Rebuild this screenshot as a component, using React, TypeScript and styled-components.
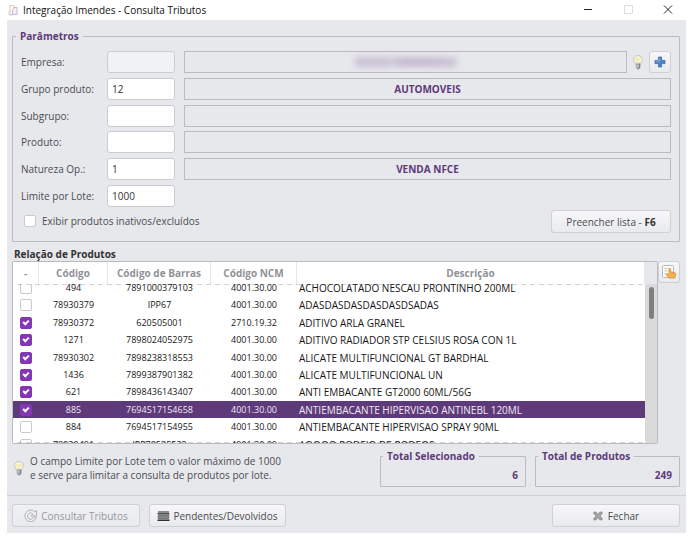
import React, { useLayoutEffect, useRef, useState } from "react";
import styled, { createGlobalStyle } from "styled-components";

const purple = "#5e3a7b";
const accent = "#8437b4";
const panel = "#e7e8ec";
const line = "#b9bbbf";

const GlobalStyle = createGlobalStyle`
  *, *::before, *::after { box-sizing: border-box; }
  body {
    margin: 0;
    background: #fff;
    color: #4a4c50;
    font: 10px/14px "Open Sans", "Noto Sans", sans-serif;
  }
  button, input { font: inherit; color: inherit; }
`;

const TitleBar = styled.header`
  display: flex;
  align-items: center;
  height: 20px;
  padding-left: 8px;
  background: #fff;
`;

const Title = styled.h1`
  flex: 1;
  margin: 0 0 0 4px;
  font-size: 10px;
  font-weight: 400;
  line-height: 18px;
  color: #111;
`;

const WindowButton = styled.button`
  display: flex;
  align-items: center;
  justify-content: center;
  width: 40px;
  height: 18px;
  padding: 0;
  border: 0;
  background: none;
`;

const Client = styled.main`
  margin: 0 2px 5px 7px;
  padding: 9px 6px 6px 5px;
  background: ${panel};
`;

const Group = styled.fieldset`
  min-width: 0;
  margin: 0;
  padding: 8px;
  border: 1px solid ${line};
  border-radius: 1px;
`;

const Legend = styled.legend`
  padding: 0 4px;
  margin-left: -5px;
  font-weight: 700;
  line-height: 14px;
  color: ${purple};
`;

const Fields = styled.div`
  display: grid;
  align-content: space-between;
  min-height: 156px;
`;

const FieldRow = styled.div`
  display: grid;
  grid-template-columns: 77px 68px 1fr auto;
  column-gap: 9px;
  align-items: center;
`;

const FieldLabel = styled.label`
  white-space: nowrap;
`;

const TextBox = styled.input`
  width: 100%;
  height: 22px;
  padding: 0 4px;
  border: 1px solid #cbccd1;
  border-radius: 3px;
  background: #fff;
  color: #333;
  &:disabled { background: #f1f2f4; }
`;

const Display = styled.output<{ $wide?: boolean }>`
  display: flex;
  align-items: center;
  justify-content: center;
  height: 22px;
  grid-column: ${(p) => (p.$wide ? "span 2" : "auto")};
  border: 1px solid ${line};
  font-weight: 700;
  color: ${purple};
`;

const Redacted = styled.span`
  width: 102px;
  height: 10px;
  background: linear-gradient(90deg, #cac1d4 0 30%, #d2cbdb 36%, #c5bad0 45% 75%, #cdc5d7);
  filter: blur(3px);
`;

const Tools = styled.div`
  display: flex;
  align-items: center;
  gap: 6px;
  margin-left: -3px;
`;

const Button = styled.button<{ $width?: number }>`
  display: inline-flex;
  align-items: center;
  justify-content: center;
  gap: 3px;
  height: 23px;
  min-width: ${(p) => p.$width ?? 22}px;
  padding: 0;
  border: 1px solid #cfd0d5;
  border-radius: 3px;
  background: linear-gradient(#f7f7f9, #e9eaec);
  color: #4a4c50;
  white-space: nowrap;
  b { color: #333; }
  &:disabled { color: #96989c; background: linear-gradient(#f0f1f3, #e9eaed); }
`;

const IconButton = styled(Button)`
  height: 22px;
`;

const GroupFooter = styled.div`
  display: flex;
  justify-content: space-between;
  align-items: flex-start;
  padding-top: 3px;
`;

const CheckLabel = styled.label`
  display: flex;
  align-items: center;
  gap: 6px;
  padding: 4px 0 0 3px;
`;

const Check = styled.input`
  appearance: none;
  display: block;
  width: 12px;
  height: 12px;
  margin: 0;
  border: 1px solid #c9cacd;
  border-radius: 2px;
  background: #fff;
  &:checked {
    border-color: ${accent};
    background: ${accent};
  }
  &:checked::before {
    content: "";
    display: block;
    width: 6px;
    height: 4px;
    margin: 2px 0 0 2px;
    border: solid #fff;
    border-width: 0 0 2px 2px;
    transform: rotate(-45deg);
  }
`;

const SectionTitle = styled.h2`
  margin: 5px 0 0 2px;
  font-size: 10px;
  line-height: 14px;
  color: #333;
`;

const ListArea = styled.div`
  display: grid;
  grid-template-columns: 1fr 22px;
  align-items: start;
`;

const ListFrame = styled.div`
  position: relative;
  display: grid;
  grid-template-columns: 1fr 12px;
  height: 183px;
  border: 1px solid ${line};
  border-radius: 2px;
  background: #fff;
`;

const Scroller = styled.div`
  min-width: 0;
  overflow: hidden;
`;

const Table = styled.table`
  width: 100%;
  table-layout: fixed;
  border-collapse: separate;
  border-spacing: 0;
  color: #161616;
  font-size: 9px;
`;

const Th = styled.th<{ $w?: number }>`
  position: sticky;
  top: 0;
  width: ${(p) => (p.$w ? p.$w + "px" : "auto")};
  height: 22px;
  padding: 0;
  border-right: 1px solid #e6e6e8;
  background: #fff;
  color: #909296;
  font-size: 10px;
`;

const Tr = styled.tr<{ $active: boolean }>`
  height: 17px;
  background: ${(p) => (p.$active ? purple : "#fff")};
  color: ${(p) => (p.$active ? "#eee8f3" : "inherit")};
  &:nth-child(5n + 2), &:nth-child(5n + 4) { height: 18px; }
`;

const Td = styled.td<{ $left?: boolean }>`
  padding: 0 0 0 ${(p) => (p.$left ? 2 : 0)}px;
  text-align: ${(p) => (p.$left ? "left" : "center")};
  font-size: ${(p) => (p.$left ? 10 : 9)}px;
  line-height: 12px;
  white-space: nowrap;
  ${Check} { margin-left: 7px; }
`;

const Dashes = styled.i<{ $bottom?: boolean }>`
  position: absolute;
  left: 4px;
  right: 12px;
  ${(p) => (p.$bottom ? "bottom: 0" : "top: 22px")};
  height: 1px;
  background: repeating-linear-gradient(90deg, #d2d2d4 0 5px, transparent 5px 9px);
  mix-blend-mode: multiply;
`;

const ScrollTrack = styled.div`
  padding: 25px 3px 0 4px;
  background: linear-gradient(${panel} 22px, #dadadb 22px);
`;

const ScrollThumb = styled.div`
  height: 32px;
  border-radius: 3px;
  background: #7d7f82;
`;

const Summary = styled.div`
  display: grid;
  grid-template-columns: 1fr 146px 145px;
  column-gap: 9px;
  align-items: start;
  padding-top: 5px;
`;

const Hint = styled.p`
  display: flex;
  align-items: center;
  gap: 6px;
  margin: 5px 0 0 2px;
`;

const TotalGroup = styled(Group)`
  padding: 5px 7px 4px;
`;

const TotalValue = styled.output`
  display: block;
  text-align: right;
  font-weight: 700;
  color: ${purple};
`;

const Actions = styled.footer`
  display: flex;
  gap: 9px;
  margin: 8px -6px 0 -5px;
  padding: 8px 6px 0 5px;
  border-top: 1px solid #cfd0d4;
  & > :last-child { gap: 5px; margin-left: auto; }
`;

const Bulb = () => (
  <svg width="10" height="15" viewBox="0 0 10 15" aria-hidden="true">
    <path d="M5 .6C2.300 .6.6 2.400.6 4.600c0 2 1.500 2.800 2 4.900h4.800c.5-2.100 2-2.900 2-4.900C9.400 2.400 7.700.6 5 .6z" fill="#f7f6e4" stroke="#bdbdb4" strokeWidth=".8" />
    <path d="M1.800 3.500Q5 2 8.200 3.500L7.600 5.800H2.400z" fill="#f3edaa" />
    <path d="M4 9V6.500M6 9V6.500" stroke="#c9c7a8" strokeWidth=".7" />
    <path d="M2.800 8.500h4.400v4L6 14.200H4L2.800 12.500z" fill="#9c9d9b" />
    <path d="M3 10.200h3.500M3 12h3" stroke="#dddddb" strokeWidth=".7" />
    <path d="M6.700 8.700v4L5 14" fill="none" stroke="#707271" strokeWidth=".9" />
  </svg>
);

const AppIcon = () => (
  <svg width="11" height="12" viewBox="0 0 11 12" aria-hidden="true">
    <path d="M2 1.500h4v9H2z" fill="#fff" stroke="#efc98d" />
    <path d="M6 3.500h3v7H4.500V6z" fill="#f3effa" stroke="#c5b7df" />
    <path d="M1 6.500v4.500h4" fill="none" stroke="#dfcdec" />
  </svg>
);

const PlusIcon = () => (
  <svg width="12" height="12" viewBox="0 0 12 12" aria-hidden="true">
    <path d="M4.400 1h3.200v3.400H11v3.200H7.600V11H4.400V7.600H1V4.400h3.400z" fill="#4b84c6" stroke="#3f6fad" strokeWidth=".8" strokeLinejoin="round" />
    <path d="M5.300 2v3.200H2" fill="none" stroke="#86b2e2" strokeWidth=".9" />
  </svg>
);

const PickIcon = () => (
  <svg width="16" height="16" viewBox="0 0 16 16" aria-hidden="true">
    <rect x="1.500" y="1.500" width="11" height="12" rx="1" fill="#fafaf7" stroke="#b9bab6" />
    <path d="M3.500 4.500h4M3.500 7h3M3.500 9.500h2" stroke="#c8c9c6" />
    <path d="M8 5.200c0-1 1.600-1 1.600 0v2.600l3.900.8c1 .3 1.300 1 1.100 1.900l-.7 3.500H8L5.300 10.800c-.5-.8.500-1.500 1.200-1l1.500.8z" fill="#f2b55c" stroke="#d48d34" strokeWidth=".8" />
    <path d="M10.900 8.500v1.600M12.600 9v1.400" stroke="#d48d34" strokeWidth=".7" />
  </svg>
);

const RefreshIcon = () => (
  <svg width="14" height="14" viewBox="0 0 14 14" aria-hidden="true" fill="none" stroke="#b0b1b4" strokeLinejoin="round" strokeLinecap="round">
    <path d="M12.300 8.500A5.800 5.800 0 1 1 10.800 2.800L12.500 1.500V7H7l1.900-2.100A3.200 3.200 0 1 0 9.600 8.500z" fill="#f1f1f3" />
  </svg>
);

const StackIcon = () => (
  <svg width="13" height="12" viewBox="0 0 13 12" aria-hidden="true">
    <path d="M1 1h11v2.500H1z" fill="#8b8c8c" />
    <path d="M.5 3.300h12v1.200H.5zM.5 6.500h12v1H.5zM.5 9.500h12V11H.5z" fill="#303131" />
    <path d="M1 4.500h11v2H1zM1 7.500h11v2H1z" fill="#777979" />
  </svg>
);

const CloseIcon = () => (
  <svg width="10" height="10" viewBox="0 0 11 11" aria-hidden="true">
    <path d="M1 1.200h2.400l2.100 2.500 2.100-2.500H10v2L7.600 5.500 10 7.800v2H7.600L5.500 7.300 3.400 9.800H1v-2l2.400-2.300L1 3.200z" fill="#a4a5a4" stroke="#858785" strokeWidth=".8" strokeLinejoin="round" />
  </svg>
);

const fields = [
  { id: "grupo", label: "Grupo produto:", value: "12", text: "AUTOMOVEIS" },
  { id: "subgrupo", label: "Subgrupo:", value: "", text: "" },
  { id: "produto", label: "Produto:", value: "", text: "" },
  { id: "natureza", label: "Natureza Op.:", value: "1", text: "VENDA NFCE" },
];

const products: [boolean, string, string, string, string][] = [
  [false, "494", "7891000379103", "4001.30.00", "ACHOCOLATADO NESCAU PRONTINHO 200ML"],
  [false, "78930379", "IPP67", "4001.30.00", "ADASDASDASDASDASDSADAS"],
  [true, "78930372", "620505001", "2710.19.32", "ADITIVO ARLA GRANEL"],
  [true, "1271", "7898024052975", "4001.30.00", "ADITIVO RADIADOR STP CELSIUS ROSA CON 1L"],
  [true, "78930302", "7898238318553", "4001.30.00", "ALICATE MULTIFUNCIONAL GT BARDHAL"],
  [true, "1436", "7899387901382", "4001.30.00", "ALICATE MULTIFUNCIONAL UN"],
  [true, "621", "7898436143407", "4001.30.00", "ANTI EMBACANTE GT2000 60ML/56G"],
  [true, "885", "7694517154658", "4001.30.00", "ANTIEMBACANTE HIPERVISAO ANTINEBL 120ML"],
  [false, "884", "7694517154955", "4001.30.00", "ANTIEMBACANTE HIPERVISAO SPRAY 90ML"],
  [false, "78930401", "IPP78535533", "4001.30.00", "AOOOO RODEIO DE RODEOS"],
];

export default function App() {
  const scroller = useRef<HTMLDivElement>(null);
  const [checked, setChecked] = useState(products.map((p) => p[0]));

  useLayoutEffect(() => {
    if (scroller.current) scroller.current.scrollTop = 5;
  }, []);

  const toggle = (index: number) =>
    setChecked((all) => all.map((value, i) => (i === index ? !value : value)));

  return (
    <>
      <GlobalStyle />
      <TitleBar>
        <AppIcon />
        <Title>Integração Imendes - Consulta Tributos</Title>
        <WindowButton aria-label="Minimizar">
          <svg width="10" height="10"><path d="M1 4.500h8" stroke="#222" /></svg>
        </WindowButton>
        <WindowButton aria-label="Maximizar" disabled>
          <svg width="10" height="10"><path d="M1.500 .5h8v8h-8z" fill="none" stroke="#dcdcdc" /></svg>
        </WindowButton>
        <WindowButton aria-label="Fechar janela">
          <svg width="10" height="10"><path d="M1 .5l8 8M9 .5l-8 8" stroke="#222" /></svg>
        </WindowButton>
      </TitleBar>

      <Client>
        <Group>
          <Legend>Parâmetros</Legend>
          <Fields>
            <FieldRow>
              <FieldLabel htmlFor="empresa">Empresa:</FieldLabel>
              <TextBox id="empresa" disabled />
              <Display><Redacted /></Display>
              <Tools>
                <Bulb />
                <IconButton aria-label="Adicionar empresa"><PlusIcon /></IconButton>
              </Tools>
            </FieldRow>
            {fields.map((f) => (
              <FieldRow key={f.id}>
                <FieldLabel htmlFor={f.id}>{f.label}</FieldLabel>
                <TextBox id={f.id} defaultValue={f.value} />
                <Display $wide htmlFor={f.id}>{f.text}</Display>
              </FieldRow>
            ))}
            <FieldRow>
              <FieldLabel htmlFor="limite">Limite por Lote:</FieldLabel>
              <TextBox id="limite" defaultValue="1000" />
            </FieldRow>
          </Fields>
          <GroupFooter>
            <CheckLabel>
              <Check type="checkbox" />
              Exibir produtos inativos/excluídos
            </CheckLabel>
            <Button $width={120}><span>Preencher lista - <b>F6</b></span></Button>
          </GroupFooter>
        </Group>

        <SectionTitle>Relação de Produtos</SectionTitle>
        <ListArea>
          <ListFrame>
            <Scroller ref={scroller}>
              <Table>
                <thead>
                  <tr>
                    <Th $w={26}>-</Th>
                    <Th $w={69}>Código</Th>
                    <Th $w={103}>Código de Barras</Th>
                    <Th $w={86}>Código NCM</Th>
                    <Th>Descrição</Th>
                  </tr>
                </thead>
                <tbody>
                  {products.map(([, code, barcode, ncm, name], i) => (
                    <Tr key={code} $active={code === "885"}>
                      <Td>
                        <Check
                          type="checkbox"
                          aria-label={name}
                          checked={checked[i]}
                          onChange={() => toggle(i)}
                        />
                      </Td>
                      <Td>{code}</Td>
                      <Td>{barcode}</Td>
                      <Td>{ncm}</Td>
                      <Td $left>{name}</Td>
                    </Tr>
                  ))}
                </tbody>
              </Table>
            </Scroller>
            <ScrollTrack><ScrollThumb /></ScrollTrack>
            <Dashes />
            <Dashes $bottom />
          </ListFrame>
          <IconButton aria-label="Selecionar produtos"><PickIcon /></IconButton>
        </ListArea>

        <Summary>
          <Hint>
            <Bulb />
            <span>
              O campo Limite por Lote tem o valor máximo de 1000
              <br />
              e serve para limitar a consulta de produtos por lote.
            </span>
          </Hint>
          <TotalGroup>
            <Legend>Total Selecionado</Legend>
            <TotalValue>{checked.filter(Boolean).length}</TotalValue>
          </TotalGroup>
          <TotalGroup>
            <Legend>Total de Produtos</Legend>
            <TotalValue>249</TotalValue>
          </TotalGroup>
        </Summary>

        <Actions>
          <Button $width={128} disabled><RefreshIcon />Consultar Tributos</Button>
          <Button $width={137}><StackIcon />Pendentes/Devolvidos</Button>
          <Button $width={128}><CloseIcon />Fechar</Button>
        </Actions>
      </Client>
    </>
  );
}
